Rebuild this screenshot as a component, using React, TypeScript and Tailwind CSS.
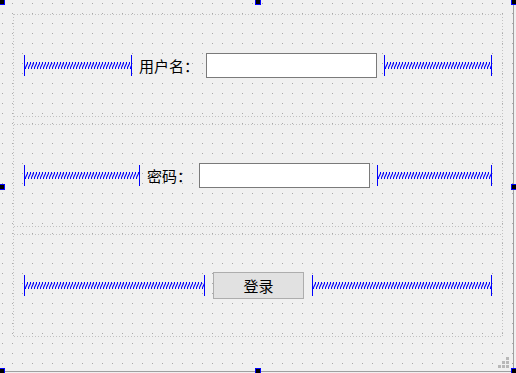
import React from "react";

const FONT = { fontFamily: '"Noto Sans CJK SC", "Noto Sans", sans-serif' };

function Spacer({ w }: { w: number }) {
  return (
    <div className="flex h-[21px] shrink-0 items-center" style={{ width: w }}>
      <div className="h-full w-px bg-[#0000ff]" />
      <svg className="h-[7px] flex-1" preserveAspectRatio="none">
        <defs>
          <pattern id={`spring${w}`} width="3" height="7" patternUnits="userSpaceOnUse">
            <path d="M0 6.5 L3 0.5" stroke="#0000ff" strokeWidth="1.1" fill="none" />
            <rect x="0" y="6" width="1" height="1" fill="#0000ff" />
            <rect x="2" y="0" width="1" height="1" fill="#0000ff" />
          </pattern>
        </defs>
        <rect x="0" y="0" width="100%" height="7" fill={`url(#spring${w})`} />
      </svg>
      <div className="h-full w-px bg-[#0000ff]" />
    </div>
  );
}

function HLine() {
  return (
    <div className="h-px w-full bg-[image:repeating-linear-gradient(to_right,#c2c2c2_0px,#c2c2c2_1px,transparent_1px,transparent_3px)]" />
  );
}

function VLine() {
  return (
    <div className="w-px self-stretch bg-[image:repeating-linear-gradient(to_bottom,#c2c2c2_0px,#c2c2c2_1px,transparent_1px,transparent_3px)]" />
  );
}

function Row({ children }: { children: React.ReactNode }) {
  return (
    <div className="flex h-[103px] flex-col">
      <HLine />
      <div className="flex flex-1 items-center pl-[10px]">{children}</div>
      <HLine />
    </div>
  );
}

function Handle({ x, y }: { x: number; y: number }) {
  return (
    <div
      className="absolute h-[6px] w-[6px] border border-[#0000ff] bg-black"
      style={{ left: x, top: y }}
    />
  );
}

export default function App() {
  return (
    <div className="relative h-[373px] w-[516px] overflow-hidden bg-[#f0f0f0]" style={FONT}>
      <div className="relative h-[372px] w-[514px] border-r border-b border-[#a0a0a0]">
        <svg className="absolute inset-0 h-full w-full">
          <defs>
            <pattern id="grid" x="2" y="3" width="10" height="10" patternUnits="userSpaceOnUse">
              <rect x="0" y="0" width="1" height="1" fill="#a8a8a8" />
            </pattern>
          </defs>
          <rect width="100%" height="100%" fill="url(#grid)" />
        </svg>

        <div className="relative ml-[13px] flex pt-[14px]">
          <VLine />
          <div className="flex w-[488px] flex-col gap-[7px]">
            <Row>
              <Spacer w={108} />
              <div className="ml-[7px] w-[67px] text-[15px] leading-none text-black">用户名：</div>
              <div className="h-[25px] w-[171px] border border-[#7a7a7a] bg-white" />
              <div className="ml-[7px]">
                <Spacer w={108} />
              </div>
            </Row>
            <Row>
              <Spacer w={116} />
              <div className="ml-[7px] w-[52px] text-[15px] leading-none text-black">密码：</div>
              <div className="h-[25px] w-[171px] border border-[#7a7a7a] bg-white" />
              <div className="ml-[7px]">
                <Spacer w={115} />
              </div>
            </Row>
            <Row>
              <Spacer w={181} />
              <div className="ml-[8px] flex h-[27px] w-[91px] items-center justify-center border border-[#adadad] bg-[#e1e1e1] text-[15px] leading-none text-black">
                登录
              </div>
              <div className="ml-[8px]">
                <Spacer w={180} />
              </div>
            </Row>
          </div>
          <VLine />
        </div>

        <div className="absolute right-[4px] bottom-[3px] grid grid-cols-3 gap-px">
          <div />
          <div />
          <div className="h-[3px] w-[3px] bg-[#b8b8b8]" />
          <div />
          <div className="h-[3px] w-[3px] bg-[#b8b8b8]" />
          <div className="h-[3px] w-[3px] bg-[#b8b8b8]" />
          <div className="h-[3px] w-[3px] bg-[#b8b8b8]" />
          <div className="h-[3px] w-[3px] bg-[#b8b8b8]" />
          <div className="h-[3px] w-[3px] bg-[#b8b8b8]" />
        </div>
      </div>

      <Handle x={-1} y={-1} />
      <Handle x={255} y={-1} />
      <Handle x={511} y={-1} />
      <Handle x={-1} y={184} />
      <Handle x={511} y={184} />
      <Handle x={-1} y={368} />
      <Handle x={255} y={368} />
      <Handle x={511} y={368} />
    </div>
  );
}
